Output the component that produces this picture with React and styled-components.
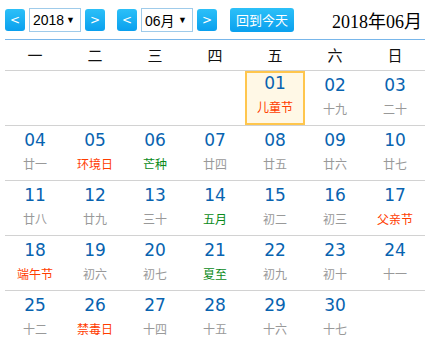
import React from "react";
import styled, { createGlobalStyle } from "styled-components";

const Global = createGlobalStyle`
  html, body { margin: 0; padding: 0; background: #fff; }
  body { font-family: "Liberation Sans", "Noto Sans CJK SC", sans-serif; }
`;

const Wrap = styled.div`
  width: 420px;
  padding: 0 5px;
`;

const Toolbar = styled.div`
  display: flex;
  align-items: center;
  height: 39px;
  border-bottom: 1px solid #78b6ea;
`;

const Group = styled.div`
  display: flex;
  align-items: center;
  gap: 4px;
  margin-right: ${(p) => p.$mr || 0}px;
`;

const ArrowBtn = styled.div`
  width: 20px;
  height: 22px;
  border-radius: 3px;
  background: linear-gradient(#2cc0f8, #0aa0ee);
  color: #fff;
  font-size: 12px;
  line-height: 22px;
  text-align: center;
  font-family: "DejaVu Sans", sans-serif;
`;

const Select = styled.div`
  box-sizing: border-box;
  width: ${(p) => p.$w}px;
  height: 24px;
  border: 1px solid #9fcbea;
  display: flex;
  align-items: center;
  justify-content: space-between;
  padding: 0 5px 0 3px;
  font-size: 14px;
  color: #000;
  font-family: "Liberation Sans", "Noto Sans CJK SC", sans-serif;
`;

const Caret = styled.span`
  font-size: 9px;
  color: #000;
`;

const TodayBtn = styled.div`
  width: 64px;
  height: 24px;
  border-radius: 3px;
  background: linear-gradient(#2cc0f8, #0aa0ee);
  color: #fff;
  font-size: 13px;
  line-height: 24px;
  text-align: center;
  font-family: "Noto Sans CJK SC", sans-serif;
`;

const Title = styled.div`
  margin-left: auto;
  padding-right: 3px;
  font-size: 18px;
  color: #000;
  font-family: "Liberation Serif", "Noto Sans CJK SC", serif;
`;

const Grid = styled.div`
  display: grid;
  grid-template-columns: repeat(7, 60px);
`;

const Head = styled(Grid)`
  height: 30px;
  border-bottom: 1px solid #d2d2d2;
`;

const HeadCell = styled.div`
  text-align: center;
  line-height: 30px;
  font-size: 15px;
  color: #111;
  font-family: "Noto Sans CJK SC", sans-serif;
`;

const Week = styled(Grid)`
  height: 54px;
  border-top: ${(p) => (p.$first ? "none" : "1px solid #d2d2d2")};
`;

const Cell = styled.div`
  box-sizing: border-box;
  height: 54px;
  padding-top: ${(p) => (p.$sel ? 2 : 4)}px;
  text-align: center;
  border: ${(p) => (p.$sel ? "2px solid #ffc64d" : "none")};
  background: ${(p) => (p.$sel ? "#fff8e6" : "transparent")};
`;

const Num = styled.div`
  font-family: "DejaVu Sans", sans-serif;
  font-size: 17px;
  line-height: 20px;
  color: #0863b0;
  margin-top: ${(p) => (p.$sel ? -2 : 0)}px;
`;

const colors = { n: "#999999", f: "#ff3c00", t: "#0a8a1a" };

const Lunar = styled.div`
  font-family: "Noto Sans CJK SC", sans-serif;
  font-size: 12px;
  line-height: 16px;
  margin-top: 6px;
  color: ${(p) => colors[p.$k]};
`;

const lunar = {
  1: ["儿童节", "f"], 2: ["十九", "n"], 3: ["二十", "n"],
  4: ["廿一", "n"], 5: ["环境日", "f"], 6: ["芒种", "t"], 7: ["廿四", "n"],
  8: ["廿五", "n"], 9: ["廿六", "n"], 10: ["廿七", "n"],
  11: ["廿八", "n"], 12: ["廿九", "n"], 13: ["三十", "n"], 14: ["五月", "t"],
  15: ["初二", "n"], 16: ["初三", "n"], 17: ["父亲节", "f"],
  18: ["端午节", "f"], 19: ["初六", "n"], 20: ["初七", "n"], 21: ["夏至", "t"],
  22: ["初九", "n"], 23: ["初十", "n"], 24: ["十一", "n"],
  25: ["十二", "n"], 26: ["禁毒日", "f"], 27: ["十四", "n"], 28: ["十五", "n"],
  29: ["十六", "n"], 30: ["十七", "n"],
};

const heads = ["一", "二", "三", "四", "五", "六", "日"];

export default function App() {
  const cells = [];
  for (let i = 0; i < 4; i++) cells.push(null);
  for (let d = 1; d <= 30; d++) cells.push(d);
  while (cells.length % 7) cells.push(null);
  const weeks = [];
  for (let i = 0; i < cells.length; i += 7) weeks.push(cells.slice(i, i + 7));

  return (
    <Wrap>
      <Global />
      <Toolbar>
        <Group $mr={12}>
          <ArrowBtn>&lt;</ArrowBtn>
          <Select $w={52}>
            <span>2018</span>
            <Caret>▼</Caret>
          </Select>
          <ArrowBtn>&gt;</ArrowBtn>
        </Group>
        <Group $mr={13}>
          <ArrowBtn>&lt;</ArrowBtn>
          <Select $w={52}>
            <span>06月</span>
            <Caret>▼</Caret>
          </Select>
          <ArrowBtn>&gt;</ArrowBtn>
        </Group>
        <TodayBtn>回到今天</TodayBtn>
        <Title>2018年06月</Title>
      </Toolbar>
      <Head>
        {heads.map((h) => (
          <HeadCell key={h}>{h}</HeadCell>
        ))}
      </Head>
      {weeks.map((w, wi) => (
        <Week key={wi} $first={wi === 0}>
          {w.map((d, di) => (
            <Cell key={di} $sel={d === 1}>
              {d && (
                <>
                  <Num $sel={d === 1}>{String(d).padStart(2, "0")}</Num>
                  <Lunar $k={lunar[d][1]}>{lunar[d][0]}</Lunar>
                </>
              )}
            </Cell>
          ))}
        </Week>
      ))}
    </Wrap>
  );
}
